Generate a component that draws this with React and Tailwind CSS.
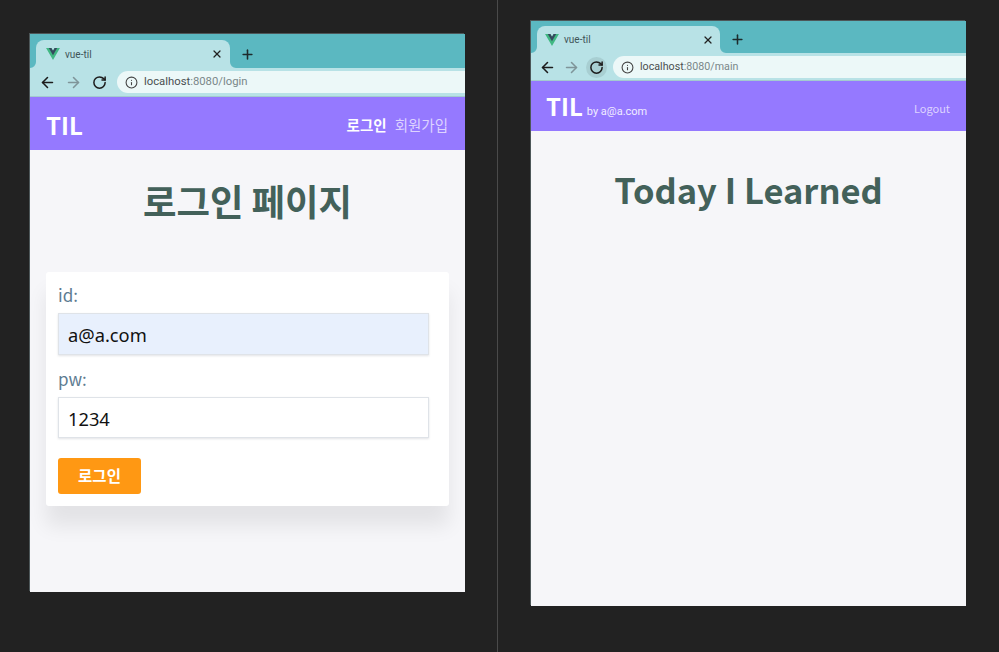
import { ArrowLeft, ArrowRight, RotateCw, Info, X, Plus } from 'lucide-react'

const kr = 'font-["Noto_Sans_CJK_KR","Noto_Sans",sans-serif]'

const VueLogo = () => (
  <svg viewBox="0 0 256 221" className="h-[12px] w-[14px] shrink-0">
    <path fill="#41b883" d="M204.8 0H256L128 220.8 0 0h97.9L128 51.2 157.4 0h47.4z" />
    <path fill="#35495e" d="M50.2 0 128 134.4 205.1 0h-47.4L128 51.2 97.9 0H50.2z" />
  </svg>
)

// little concave foot on each side of the active tab
const TabFoot = ({ className, d }) => (
  <svg viewBox="0 0 6 6" className={`absolute bottom-0 h-[6px] w-[6px] ${className}`}>
    <path fill="#b8e2e6" d={d} />
  </svg>
)

// chrome frame shared by both windows
const BrowserBar = ({ url, tabClass, stripClass, toolbarClass, forwardClass, reloadClass, urlClass, activeReload }) => (
  <>
    <div className={`flex items-end bg-[#5bb8c1] pl-[6px] ${stripClass}`}>
      <div className={`relative flex items-center rounded-t-[8px] bg-[#b8e2e6] ${tabClass}`}>
        <TabFoot className="left-[-6px]" d="M6 0V6H0A6 6 0 0 0 6 0z" />
        <TabFoot className="right-[-6px]" d="M0 0V6H6A6 6 0 0 1 0 0z" />
        <VueLogo />
        <span className="ml-[5px] flex-1 font-['Roboto',sans-serif] text-[10px] text-[#3f5458]">vue-til</span>
        <X className="h-[12px] w-[12px] text-[#222]" strokeWidth={2.5} />
      </div>
      <Plus className="mb-[6px] ml-[10px] h-[15px] w-[15px] text-[#1d2b2d]" strokeWidth={2.5} />
    </div>
    <div className={`flex items-center border-b border-[#a3cbcf] bg-[#b8e2e6] ${toolbarClass}`}>
      <ArrowLeft className="h-[17px] w-[17px] text-[#1c1c1c]" strokeWidth={2.2} />
      <ArrowRight className={`h-[17px] w-[17px] text-[#7f9599] ${forwardClass}`} strokeWidth={2.2} />
      <div className={`flex h-[21px] w-[21px] items-center justify-center rounded-full ${reloadClass} ${activeReload ? 'bg-[#a8cfd2]' : ''}`}>
        <RotateCw className="h-[15px] w-[15px] text-[#1c1c1c]" strokeWidth={2.4} />
      </div>
      <div className={`flex h-[22px] flex-1 items-center rounded-l-full bg-[#ecf8f8] pl-[8px] font-['Roboto',sans-serif] ${urlClass}`}>
        <Info className="h-[13px] w-[13px] text-[#444]" strokeWidth={2} />
        <span className="ml-[6px] text-[#4a4f50]">localhost</span>
        <span className="text-[#7a8789]">{url}</span>
      </div>
    </div>
  </>
)

const Field = ({ label, value, className, inputClass }) => (
  <div className={className}>
    <label className={`block h-[25px] text-[17px] leading-[21px] text-[#5d7b91] ${kr}`}>{label}</label>
    <div className={`mt-[4px] flex w-[371px] items-center border border-[#dfe3e8] pl-[9px] pt-[2px] font-['Noto_Sans',sans-serif] text-[18.3px] text-[#111] shadow-[0_1px_2px_rgba(60,70,90,0.15)] ${inputClass}`}>
      {value}
    </div>
  </div>
)

const LoginWindow = () => (
  <section className="absolute left-[30px] top-[34px] flex h-[558px] w-[435px] flex-col bg-[#f6f6f9] shadow-[-1px_-1px_0_#4d5759]">
    <BrowserBar
      url=":8080/login"
      stripClass="h-[34px]"
      tabClass="h-[28px] w-[194px] pl-[10px] pr-[7px]"
      toolbarClass="h-[29px] pl-[9px]"
      forwardClass="ml-[9px]"
      reloadClass="ml-[7px]"
      urlClass="ml-[7px] text-[11.3px]"
    />
    <header className={`flex h-[53px] items-center justify-between bg-[#9579ff] pl-[16px] pr-[17px] pt-[2px] ${kr}`}>
      <span className="text-[24px] font-bold text-white">TIL</span>
      <nav className="flex items-center gap-[8px] text-[14.5px]">
        <span className="font-bold text-white">로그인</span>
        <span className="text-[#ddd3ff]">회원가입</span>
      </nav>
    </header>
    <main className="flex flex-1 flex-col px-[16px]">
      <h1 className={`mt-[22px] h-[56px] text-center text-[36.4px] font-bold leading-[56px] text-[#43615a] ${kr}`}>로그인 페이지</h1>
      <form className="mt-[44px] h-[234px] w-[403px] rounded-[3px] bg-white px-[12px] pt-[12px] shadow-[0_20px_20px_rgba(0,0,0,0.08)]">
        <Field label="id:" value="a@a.com" inputClass="h-[42px] bg-[#e8f0fd]" />
        <Field label="pw:" value="1234" className="mt-[13px]" inputClass="h-[41px] bg-white" />
        <button type="button" className={`mt-[20px] h-[36px] w-[83px] rounded-[3px] bg-[#ff9813] text-[15.5px] font-bold text-white ${kr}`}>로그인</button>
      </form>
    </main>
  </section>
)

const MainWindow = () => (
  <section className="absolute left-[531px] top-[21px] flex h-[585px] w-[435px] flex-col bg-[#f6f6f9] shadow-[-1px_-1px_0_#4d5759]">
    <BrowserBar
      url=":8080/main"
      stripClass="h-[32px]"
      tabClass="h-[27px] w-[183px] pl-[8px] pr-[6px]"
      toolbarClass="h-[28px] pl-[8px] pt-[1px]"
      forwardClass="ml-[7px]"
      reloadClass="ml-[6px]"
      urlClass="ml-[6px] text-[10.7px]"
      activeReload
    />
    <header className={`flex h-[50px] items-center justify-between bg-[#9579ff] pl-[15px] pr-[16px] ${kr}`}>
      <div className="flex items-baseline">
        <span className="text-[24px] font-bold text-white">TIL</span>
        <span className="relative -top-[1px] ml-[4px] font-['Roboto',sans-serif] text-[11px] text-[#f1edff]">by a@a.com</span>
      </div>
      <span className="mt-[5px] text-[11px] text-[#ddd3ff]">Logout</span>
    </header>
    <main className="flex-1">
      <h1 className={`mt-[30px] h-[56px] text-center text-[34.5px] font-bold leading-[56px] text-[#43615a] ${kr}`}>Today I Learned</h1>
    </main>
  </section>
)

export default function App() {
  return (
    <div className="relative h-[652px] w-[999px] overflow-hidden bg-[#222222]">
      <div className="absolute left-[497px] top-0 h-full w-px bg-[#4a4a4a]" />
      <LoginWindow />
      <MainWindow />
    </div>
  )
}
